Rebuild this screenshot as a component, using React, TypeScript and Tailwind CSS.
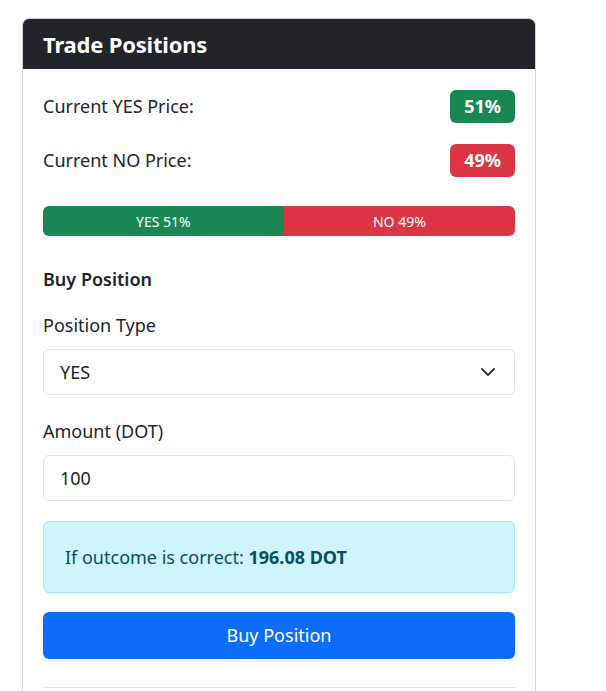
import React from 'react';

const font = { fontFamily: '"Noto Sans", "Open Sans", sans-serif' };

function PriceRow({ label, value, tone }: { label: string; value: string; tone: 'yes' | 'no' }) {
    return (
        <div className="flex items-center justify-between">
            <span className="text-[18px] text-[#212529]">{label}</span>
            <span
                className={`rounded-md px-[14px] h-[33px] flex items-center text-[18px] font-bold text-white ${tone === 'yes' ? 'bg-[#198754]' : 'bg-[#dc3545]'}`}
            >
                {value}
            </span>
        </div>
    );
}

export default function App() {
    const yes = 51;
    return (
        <div className="min-h-screen bg-white pt-[18px] pl-[22px]" style={font}>
            <div className="w-[514px] border border-[#d4d4d4] rounded-[7px] overflow-hidden">
                <div className="bg-[#212529] h-[50px] flex items-center px-[20px]">
                    <h5 className="text-white text-[22px] font-bold tracking-[-0.2px]">Trade Positions</h5>
                </div>
                <div className="px-[20px] pt-[21px] pb-[12px]">
                    <div className="flex flex-col gap-[21px]">
                        <PriceRow label="Current YES Price:" value="51%" tone="yes" />
                        <PriceRow label="Current NO Price:" value="49%" tone="no" />
                    </div>

                    <div className="mt-[29px] flex h-[30px] rounded-md overflow-hidden text-[14px] text-white">
                        <div className="bg-[#198754] flex items-center justify-center" style={{ width: `${yes}%` }}>
                            YES 51%
                        </div>
                        <div className="bg-[#dc3545] flex items-center justify-center flex-1">NO 49%</div>
                    </div>

                    <h6 className="mt-[30px] text-[18px] font-semibold text-[#212529]">Buy Position</h6>

                    <label className="block mt-[19px] text-[18px] text-[#212529]">Position Type</label>
                    <div className="mt-[10px] h-[46px] border border-[#dee2e6] rounded-md flex items-center justify-between pl-[16px] pr-[18px]">
                        <span className="text-[18px] text-[#212529]">YES</span>
                        <svg width="16" height="16" viewBox="0 0 16 16" fill="none" stroke="#343a40" strokeWidth="2" strokeLinecap="round" strokeLinejoin="round">
                            <path d="m2 5 6 6 6-6" />
                        </svg>
                    </div>

                    <label className="block mt-[23px] text-[18px] text-[#212529]">Amount (DOT)</label>
                    <div className="mt-[10px] h-[46px] border border-[#dee2e6] rounded-md flex items-center pl-[16px]">
                        <span className="text-[18px] text-[#212529]">100</span>
                    </div>

                    <div className="mt-[20px] h-[72px] bg-[#cff4fc] border border-[#9eeaf9] rounded-md flex items-center px-[21px] text-[18px] text-[#055160]">
                        <span>
                            If outcome is correct: <strong className="font-bold">196.08 DOT</strong>
                        </span>
                    </div>

                    <button className="mt-[19px] w-full h-[47px] bg-[#0d6efd] rounded-md text-white text-[18px] flex items-center justify-center">
                        Buy Position
                    </button>

                    <div className="mt-[28px] border-t border-[#dee2e6]" />
                    <div className="h-[40px]" />
                </div>
            </div>
        </div>
    );
}
